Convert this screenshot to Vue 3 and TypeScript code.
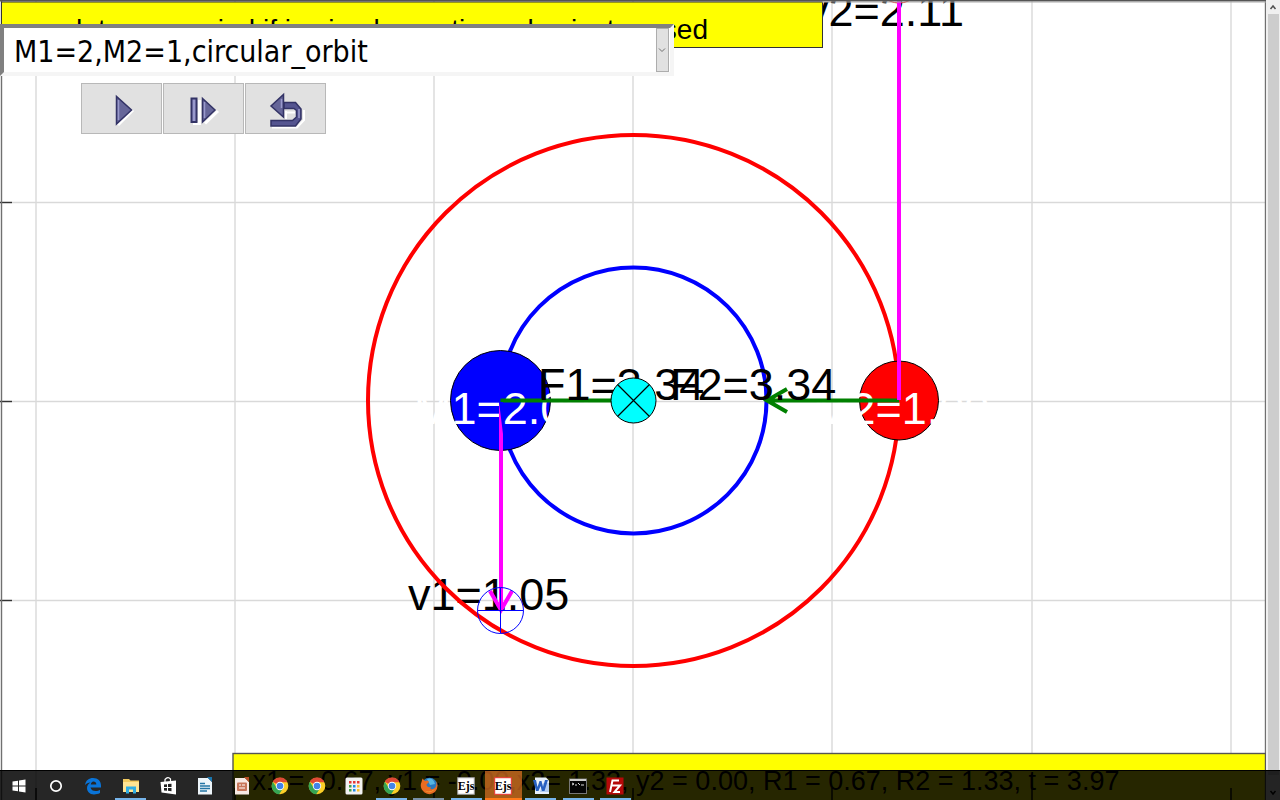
<script setup lang="ts">
import { ref } from 'vue'

interface TaskItem {
  name: string
  icon: string
  state?: 'open' | 'dim' | 'active'
}

const scenario = ref('circular')
const verticals = [36, 235, 434, 633, 832, 1032, 1231]
const horizontals = [202, 401, 600]

const tasks: TaskItem[] = [
  { name: 'Start', icon: 'windows' },
  { name: 'Search', icon: 'cortana' },
  { name: 'Edge', icon: 'edge' },
  { name: 'File Explorer', icon: 'folder', state: 'open' },
  { name: 'Store', icon: 'store' },
  { name: 'Writer', icon: 'writer' },
  { name: 'Impress', icon: 'impress' },
  { name: 'Chrome', icon: 'chrome' },
  { name: 'Chrome profile', icon: 'chrome' },
  { name: 'App launcher', icon: 'apps' },
  { name: 'Chrome window', icon: 'chrome', state: 'open' },
  { name: 'Firefox', icon: 'firefox', state: 'dim' },
  { name: 'Ejs console', icon: 'ejs', state: 'open' },
  { name: 'Ejs simulation', icon: 'ejsred', state: 'active' },
  { name: 'Word', icon: 'word', state: 'open' },
  { name: 'Command prompt', icon: 'cmd', state: 'open' },
  { name: 'FileZilla', icon: 'filezilla', state: 'open' },
]
const appDots = ['#e53935', '#e53935', '#e53935', '#43a047', '#1e88e5', '#fbc02d', '#43a047', '#1e88e5', '#fbc02d']
</script>

<template>
  <div class="desktop">
    <svg class="plot" viewBox="0 0 1280 800" preserveAspectRatio="xMidYMid slice">
      <rect width="1280" height="800" fill="#fff" />
      <g stroke="#d9d9d9" stroke-width="1.4">
        <line v-for="x in verticals" :key="'v' + x" :x1="x" :x2="x" y1="0" y2="800" />
        <line v-for="y in horizontals" :key="'h' + y" x1="0" x2="1265" :y1="y + 0.5" :y2="y + 0.5" />
      </g>
      <g stroke="#333" stroke-width="1.4">
        <line v-for="y in horizontals" :key="'t' + y" x1="0" x2="12" :y1="y + 0.5" :y2="y + 0.5" />
      </g>
      <path d="M1.5 0V800M1265.5 0V800" stroke="#707070" stroke-width="1.4" />

      <g class="label">
        <text x="408" y="610">v1=1.05</text>
        <text x="806" y="26">v2=2.11</text>
      </g>

      <g fill="none" stroke-width="4">
        <circle cx="633.5" cy="400.5" r="265.5" stroke="#f00" />
        <circle cx="633.5" cy="400.5" r="133" stroke="#00f" />
      </g>
      <circle cx="500.5" cy="400.5" r="50" fill="#00f" stroke="#000" />
      <circle cx="899" cy="400.5" r="39.5" fill="#f00" stroke="#000" />
      <g class="label light">
        <text x="414" y="424">M1=2.00</text>
        <text x="813" y="424">M2=1.00</text>
      </g>

      <path d="M500.5 400.5H634M899 400.5H767M787 389L767 400.5L787 412" fill="none" stroke="#008000" stroke-width="4" />
      <path d="M501 402V610M490 591L501 610L512 591" fill="none" stroke="#f0f" stroke-width="4" />
      <path d="M499 402L503 402L503 434Z" fill="#00f" />
      <circle cx="899" cy="-20" r="23" fill="none" stroke="#f00" />
      <path d="M899 400V0" stroke="#f0f" stroke-width="4" />
      <path d="M477.500 610.500H523.500M500.500 587.500V633.500" stroke="#00f" />
      <circle cx="500.5" cy="610.5" r="23" fill="none" stroke="#00f" />

      <g class="label">
        <text x="538" y="400">F1=3.34</text>
        <text x="670" y="400">F2=3.34</text>
      </g>
      <circle cx="633.5" cy="400.5" r="22.500" fill="#0ff" stroke="#000" />
      <path d="M617.500 384.500L649.500 416.500M649.500 384.500L617.500 416.500" stroke="#000" stroke-width="1.200" />

      <rect x="1.5" y="2" width="821" height="45.500" fill="#ff0" stroke="#333" />
      <text class="note" x="708" y="39" text-anchor="end">new data are period if in circular motion, play just erased</text>
      <rect x="233" y="753.500" width="1032.500" height="60" fill="#ff0" stroke="#555" stroke-width="1.400" />
      <text class="status" x="686" y="790" text-anchor="middle">x1 = -0.67, y1 = -0.00,x2= 1.33, y2 = 0.00, R1 = 0.67, R2 = 1.33, t = 3.97</text>
      <g stroke="#000" stroke-width="1.4">
        <line v-for="x in verticals" :key="'b' + x" :x1="x" :x2="x" y1="788" y2="800" />
      </g>
      <path d="M0 .5H1280" stroke="#555" stroke-width="2" />
      <path d="M822 2H1266" stroke="#aaa" />
    </svg>

    <main class="workspace">
      <section class="controls">
        <div class="chooser">
          <select v-model="scenario" aria-label="Orbit">
            <option value="circular">M1=2,M2=1,circular_orbit</option>
          </select>
          <span class="drop" aria-hidden="true">
            <svg viewBox="0 0 8 6" width="8" height="6"><path d="M1 1.500L4 4.500L7 1.500" fill="none" stroke="#707070" /></svg>
          </span>
        </div>
        <div class="buttons">
          <button type="button" aria-label="Play">
            <svg viewBox="0 0 40 40" width="40" height="40">
              <path d="M16 35L31 20" stroke="#fff" stroke-width="3" />
              <path d="M14.500 6.500V34L29.500 20Z" fill="#666699" stroke="#333366" stroke-width="1.500" />
              <path d="M16.500 10V30" stroke="#9999cc" stroke-width="1.500" />
            </svg>
          </button>
          <button type="button" aria-label="Step">
            <svg viewBox="0 0 40 40" width="40" height="40">
              <path d="M9 33.500H15.500V10M21 33.500L34 21" fill="none" stroke="#fff" stroke-width="3" />
              <path d="M7.500 8.500H12.500V32H7.500Z" fill="#9999cc" stroke="#333366" stroke-width="2" />
              <path d="M18.500 8.500V32L31 20Z" fill="#666699" stroke="#333366" stroke-width="1.500" />
              <path d="M20.500 12V28" stroke="#9999cc" stroke-width="1.500" />
            </svg>
          </button>
          <button type="button" aria-label="Reset">
            <svg viewBox="0 0 40 40" width="40" height="40">
              <path d="M6 37.500H31L38 30V20M20 21V29M20 22.500H29" fill="none" stroke="#fff" stroke-width="2" />
              <path d="M18 12.500H29.500L35 19V29L29.500 36H5V30.500H26.500L30.500 27V20.500L28 18.500H18Z" fill="#555590" stroke="#333366" stroke-width="1.500" />
              <path d="M17.500 4.500V27L5 16Z" fill="#666699" stroke="#333366" stroke-width="1.500" />
              <path d="M15.500 9V18M33 19V28" stroke="#9999cc" stroke-width="1.500" />
            </svg>
          </button>
        </div>
      </section>
      <aside class="scrollbar">
        <button type="button" aria-label="Scroll up">
          <svg viewBox="0 0 8 6" width="8" height="6"><path d="M1.500 5L4 2L6.500 5" fill="none" stroke="#505050" stroke-width="1.500" /></svg>
        </button>
        <div class="thumb"></div>
        <button type="button" class="down" aria-label="Scroll down">
          <svg viewBox="0 0 8 6" width="8" height="6"><path d="M1.500 1L4 4L6.500 1" fill="none" stroke="#000" stroke-width="1.500" /></svg>
        </button>
      </aside>
    </main>

    <nav class="taskbar">
      <div class="tasks">
        <button v-for="task in tasks" :key="task.name" type="button" :class="['task', task.state]" :aria-label="task.name">
          <svg viewBox="0 0 18 18" width="18" height="18">
            <g v-if="task.icon === 'windows'" fill="#fff">
              <path d="M2.500 4.500L8 3.700V8.600H2.500ZM9 3.500L15.500 2.500V8.600H9ZM2.500 9.500H8V14.300L2.500 13.500ZM9 9.500H15.500V15.500L9 14.500Z" />
            </g>
            <circle v-else-if="task.icon === 'cortana'" cx="9" cy="9" r="5.200" fill="none" stroke="#fff" stroke-width="1.700" />
            <path v-else-if="task.icon === 'edge'" d="M1 8C2 3 5 1 9 1C14 1 17 4 17 8.500V10.500H6.500C7 13 9 14 11.500 14C13.500 14 15 13.500 16 13V16C14 17 12 17.400 10 17.400C5.500 17.400 3 14.500 3 11C3 8.500 4.500 6.500 6.500 5.500C4 5.500 2.500 6.500 1 8ZM6.800 7.500H12.300C12.300 5.500 11 4.600 9.500 4.600C8 4.600 7 6 6.800 7.500Z" fill="#0a74d8" />
            <g v-else-if="task.icon === 'folder'">
              <path d="M1 2H7L8.500 3.500H17V15H1Z" fill="#f2ca60" /><path d="M1 5H17V15H1Z" fill="#ffe493" />
              <path d="M4 16.500V9.500H14V16.500H11V12.500H7V16.500Z" fill="#30aee4" />
            </g>
            <g v-else-if="task.icon === 'store'">
              <path d="M6 5V2.500Q9-1 11.500 2V5" fill="none" stroke="#fff" stroke-width="1.200" />
              <path d="M1.500 5L17 3.500V17.500L2.500 15.500Z" fill="#fff" />
              <path d="M5 7.500L8 7.200V10H5ZM9 7.100L12.500 6.700V10H9ZM5 11H8V13.700L5 13.400ZM9 11H12.500V14.200L9 13.800Z" fill="#222" />
            </g>
            <g v-else-if="task.icon === 'writer'">
              <path d="M2 1H12L16 5V17.500H2Z" fill="#edf5fa" /><path d="M11 0H16V5Z" fill="#1976ae" />
              <path d="M4 6.500H9M4 9H14M4 11.500H14M4 14H11" stroke="#2375a5" stroke-width="1.400" />
            </g>
            <g v-else-if="task.icon === 'impress'">
              <path d="M2 1H12L16 5V17.500H2Z" fill="#f7e9e3" /><path d="M11 0H16V5Z" fill="#b94e25" />
              <rect x="4" y="5.500" width="10" height="8.500" rx="1" fill="#c87659" /><path d="M6 8H8M9 8H12M6 11H12" stroke="#fff" />
            </g>
            <g v-else-if="task.icon === 'chrome'">
              <circle cx="9" cy="9" r="8.300" fill="#fbcf27" />
              <path d="M9 9L1.800 4.800A8.300 8.300 0 0 1 16.500 5.300H9Z" fill="#df4936" />
              <path d="M1.800 4.800A8.300 8.300 0 0 0 8.200 17.300L12.200 11L9 9L5.500 10.500Z" fill="#36a554" />
              <circle cx="9" cy="9" r="4.200" fill="#fff" /><circle cx="9" cy="9" r="3.300" fill="#4284e8" />
            </g>
            <g v-else-if="task.icon === 'apps'">
              <rect x=".5" y=".5" width="17" height="17" rx="1.500" fill="#f2f2f2" />
              <rect v-for="(dot, i) in appDots" :key="i" :x="4 + (i % 3) * 4" :y="4 + Math.floor(i / 3) * 4" width="2.500" height="2.500" :fill="dot" />
            </g>
            <g v-else-if="task.icon === 'firefox'">
              <circle cx="9.500" cy="8.500" r="7.800" fill="#2879c0" /><path d="M7 2Q13 0 15 7L10 8Z" fill="#55b6e5" />
              <path d="M2.500 1.500L5 4Q8 2.500 9 5L6.500 7.500Q7 11 11 10Q9 13 13 12Q17 11 16.500 4Q19 11 15 15Q10 19 4.500 15.500Q-1 11 1.500 5Z" fill="#e96b20" />
              <path d="M15 12Q10 18 4 13Q9 17 15 12Z" fill="#fbc143" />
            </g>
            <g v-else-if="task.icon === 'ejs' || task.icon === 'ejsred'">
              <rect x=".7" y=".7" width="16.600" height="16.600" fill="#fff" :stroke="task.icon === 'ejsred' ? '#e33' : '#999'" />
              <text class="ejs" x="9" y="13" text-anchor="middle">Ejs</text>
            </g>
            <g v-else-if="task.icon === 'word'">
              <path d="M3 .5H14L17 3.500V17H3Z" fill="#e8f0fb" /><path d="M11 6H17V15H8" fill="#b4cdf0" />
              <path d="M1 3L4 3L5.500 10L7.500 4H9.500L11 10L13 3H16L12.500 14H10L8.500 9L6.500 14H4Z" fill="#275fc0" />
            </g>
            <g v-else-if="task.icon === 'cmd'">
              <rect x=".5" y="2" width="17" height="14.500" fill="#050505" stroke="#777" /><path d="M1 3H17" stroke="#ccc" stroke-width="2" />
              <path d="M3 6L5 7L3 8M6 8H8M9 6L11 8M12 8H15" fill="none" stroke="#ddd" />
            </g>
            <g v-else>
              <rect x=".5" y=".5" width="17" height="17" fill="#b50909" />
              <path d="M4 15L6.500 3.500H13M5 8.500H10M9 8.500H14L8.500 15H14" fill="none" stroke="#fff" stroke-width="2" />
            </g>
          </svg>
        </button>
      </div>
    </nav>
  </div>
</template>

<style>
body { background: #fff; overflow: hidden; }
</style>

<style scoped>
.desktop {
  position: relative;
  display: flex;
  flex-direction: column;
  height: 100vh;
  overflow: hidden;
  font-family: "Liberation Sans", Arial, sans-serif;
}
.plot { position: absolute; inset: 0; width: 100%; height: 100%; }
.label { font-size: 45px; fill: #000; }
.light { fill: #fff; }
.note { font-size: 28px; fill: #000; }
.status { font-size: 27px; fill: #000; }
.workspace { position: relative; display: flex; flex: 1; min-height: 0; }
.controls { flex: 1; padding-top: 24px; }
.chooser {
  box-sizing: border-box;
  display: flex;
  width: 53.2%;
  height: 52px;
  border: 4px solid;
  border-color: #808080 #f5f5f5 #f5f5f5 #808080;
  background: #fff;
}
select {
  flex: 1;
  min-width: 0;
  padding: 2px 10px 0;
  border: 0;
  appearance: none;
  background: #fff;
  color: #000;
  font: 30px "DejaVu Sans Condensed", "DejaVu Sans", sans-serif;
}
.drop {
  box-sizing: border-box;
  display: flex;
  align-items: center;
  justify-content: center;
  width: 13px;
  margin-right: 1px;
  border: 1px solid #adadad;
  background: #e1e1e1;
}
.buttons { display: flex; gap: 1px; padding: 7px 0 0 81px; }
.buttons button {
  display: flex;
  align-items: center;
  justify-content: center;
  width: 81px;
  height: 51px;
  padding: 2px 0 0;
  border: 1px solid #b8b8b8;
  background: #e1e1e1;
}
.scrollbar { display: flex; flex-direction: column; width: 14px; margin-bottom: -30px; background: #f0f0f0; }
.scrollbar button { display: flex; align-items: center; justify-content: center; height: 14px; padding: 0; border: 0; background: #f0f0f0; }
.thumb { flex: 1; margin: 0 1px 11px 2px; background: #cdcdcd; }
.taskbar {
  position: relative;
  box-sizing: border-box;
  height: 30px;
  border-top: 1px solid #000;
  background: rgba(0, 0, 0, 0.85);
}
.tasks {
  display: grid;
  grid-template-columns: repeat(17, 1fr);
  width: 634px;
  height: 100%;
}
.task {
  display: flex;
  align-items: center;
  justify-content: center;
  padding: 0;
  border: 0;
  background: none;
}
.open { background: linear-gradient(#76b4ea, #76b4ea) bottom / 31px 2px no-repeat; }
.dim { background: linear-gradient(#7890a5, #7890a5) bottom / 31px 2px no-repeat; }
.active { background: linear-gradient(#ff7818, #ff7818) bottom / 100% 2px no-repeat, rgba(225, 115, 35, 0.7); }
.ejs { font: bold 12px "Liberation Serif", serif; fill: #000; }
</style>
